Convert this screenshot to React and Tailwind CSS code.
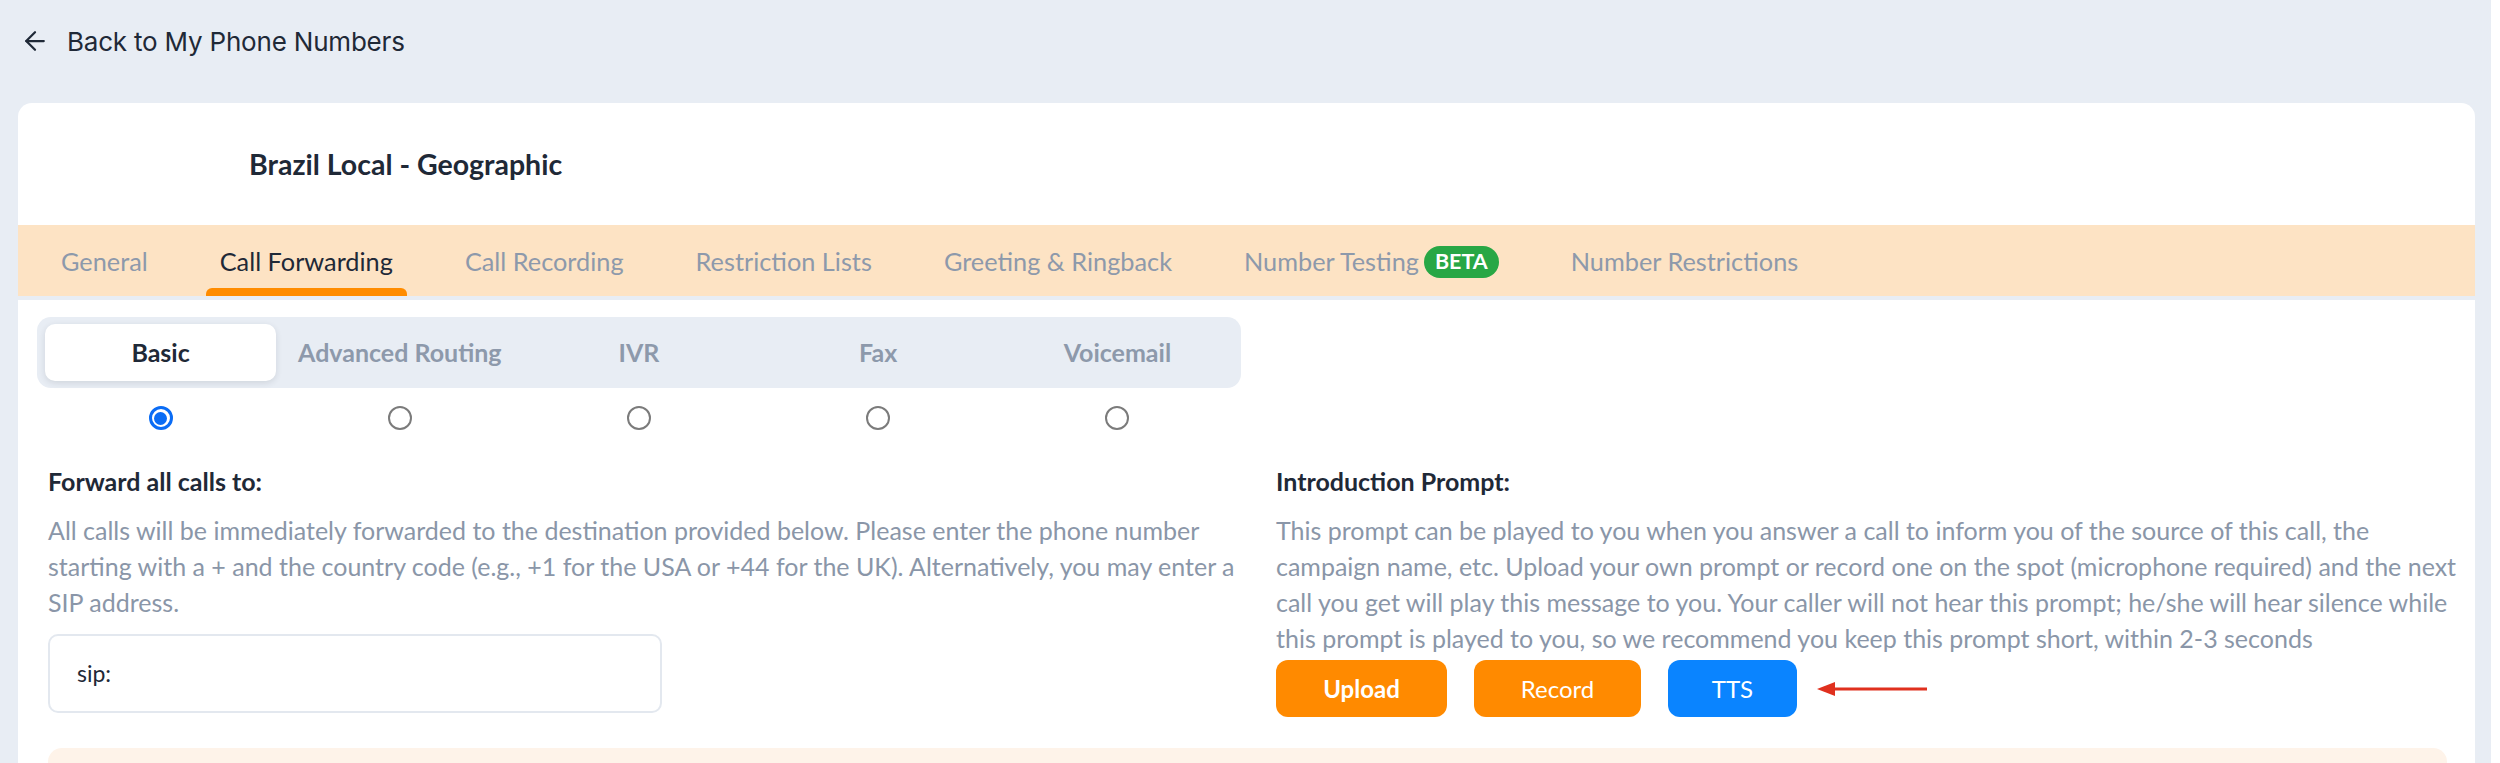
import React from "react";
import { ArrowLeft } from "lucide-react";

const tabs = [
  "General",
  "Call Forwarding",
  "Call Recording",
  "Restriction Lists",
  "Greeting & Ringback",
  "Number Testing",
  "Number Restrictions",
];

const modes = ["Basic", "Advanced Routing", "IVR", "Fax", "Voicemail"];

const Radio = ({ checked }) =>
  checked ? (
    <span className="flex h-[24px] w-[24px] items-center justify-center rounded-full border-[3px] border-[#0a6cf5] bg-white">
      <span className="h-[13px] w-[13px] rounded-full bg-[#0a6cf5]" />
    </span>
  ) : (
    <span className="h-[24px] w-[24px] rounded-full border-2 border-[#7b7b7b] bg-white" />
  );

const App = () => {
  return (
    <div className="h-[763px] overflow-hidden bg-white font-['Lato',sans-serif]">
      <div className="min-h-[763px] w-[2491px] bg-[#e8edf4]">
        {/* back link */}
        <div className="flex h-[82px] items-center gap-[17px] pl-[20px] font-['Inter',sans-serif] text-[26px] text-[#1f2937]">
          <ArrowLeft size={30} strokeWidth={1.8} />
          <span className="tracking-[-0.2px]">Back to My Phone Numbers</span>
        </div>

        <div className="ml-[18px] mt-[21px] w-[2457px] rounded-t-[14px] bg-white">
          {/* number title */}
          <div className="flex h-[122px] items-center pl-[231px]">
            <h1 className="text-[28.5px] font-bold text-[#1f2937]">Brazil Local - Geographic</h1>
          </div>

          {/* tabs */}
          <div className="flex h-[71px] gap-[44px] bg-[#fde3c4] pl-[29px]">
            {tabs.map((t) => {
              const active = t === "Call Forwarding";
              return (
                <div key={t} className="flex flex-col">
                  <div
                    className={
                      "flex flex-1 items-center gap-[5px] px-[14px] pt-[10px] text-[25.3px] " +
                      (active ? "text-[#1f2937]" : "text-[#8d99ab]")
                    }
                  >
                    {t}
                    {t === "Number Testing" && (
                      <span className="flex h-[32px] items-center rounded-full bg-[#28a745] px-[11px] text-[21.5px] font-bold text-white">
                        BETA
                      </span>
                    )}
                  </div>
                  <div className={"h-[8px] rounded-t-[6px] " + (active ? "bg-[#ff8c00]" : "")} />
                </div>
              );
            })}
          </div>
          <div className="h-[4px] bg-[#e8edf4]" />

          <div className="px-[19px] pt-[17px]">
            {/* routing type */}
            <div className="grid h-[71px] w-[1204px] grid-cols-5 gap-2 rounded-[14px] bg-[#e8edf4] px-2 py-[7px]">
              {modes.map((m, i) => (
                <div
                  key={m}
                  className={
                    "flex items-center justify-center rounded-[10px] text-[25px] font-bold " +
                    (i === 0 ? "bg-white text-[#1f2937] shadow-[0_2px_6px_rgba(30,41,59,0.12)]" : "text-[#8d99ab]")
                  }
                >
                  {m}
                </div>
              ))}
            </div>
            <div className="mt-[18px] grid w-[1204px] grid-cols-5 gap-2 px-2">
              {modes.map((m, i) => (
                <div key={m} className="flex justify-center">
                  <Radio checked={i === 0} />
                </div>
              ))}
            </div>

            <div className="ml-[11px] mt-[35px] grid w-[2399px] grid-cols-[1170px_1171px] gap-[58px]">
              <div>
                <h3 className="text-[25px] leading-[32px] font-bold text-[#1f2937]">Forward all calls to:</h3>
                <p className="mt-[15px] whitespace-nowrap text-[25px] leading-[36px] text-[#8a96a8]">
                  All calls will be immediately forwarded to the destination provided below. Please enter the phone number
                  <br />
                  starting with a + and the country code (e.g., +1 for the USA or +44 for the UK). Alternatively, you may enter a
                  <br />
                  SIP address.
                </p>
                <div className="mt-[14px] flex h-[79px] w-[614px] items-center rounded-[10px] border-2 border-[#e3e8ef] px-[27px] text-[23px] text-[#1f2937]">
                  sip:
                </div>
              </div>

              <div>
                <h3 className="text-[25px] leading-[32px] font-bold text-[#1f2937]">Introduction Prompt:</h3>
                <p className="mt-[15px] whitespace-nowrap text-[25px] leading-[36px] text-[#8a96a8]">
                  This prompt can be played to you when you answer a call to inform you of the source of this call, the
                  <br />
                  campaign name, etc. Upload your own prompt or record one on the spot (microphone required) and the next
                  <br />
                  call you get will play this message to you. Your caller will not hear this prompt; he/she will hear silence while
                  <br />
                  this prompt is played to you, so we recommend you keep this prompt short, within 2-3 seconds
                </p>
                <div className="mt-[4px] flex items-center gap-[27px]">
                  <button className="h-[57px] w-[171px] rounded-[12px] bg-[#ff8a00] text-[24px] font-bold text-white">
                    Upload
                  </button>
                  <button className="h-[57px] w-[167px] rounded-[12px] bg-[#ff8a00] text-[24px] text-white">
                    Record
                  </button>
                  <button className="h-[57px] w-[129px] rounded-[12px] bg-[#0a84ff] text-[24px] text-white">
                    TTS
                  </button>
                  <svg width="112" height="20" viewBox="0 0 112 20" className="-ml-[7px]">
                    <line x1="16" y1="10" x2="110" y2="10" stroke="#e0301e" strokeWidth="3" />
                    <polygon points="0,10 18,3 18,17" fill="#e0301e" />
                  </svg>
                </div>
              </div>
            </div>

            <div className="ml-[11px] mt-[31px] h-[60px] w-[2399px] rounded-t-[14px] bg-[#fef3e9]" />
          </div>
        </div>
      </div>
    </div>
  );
};

export default App;
